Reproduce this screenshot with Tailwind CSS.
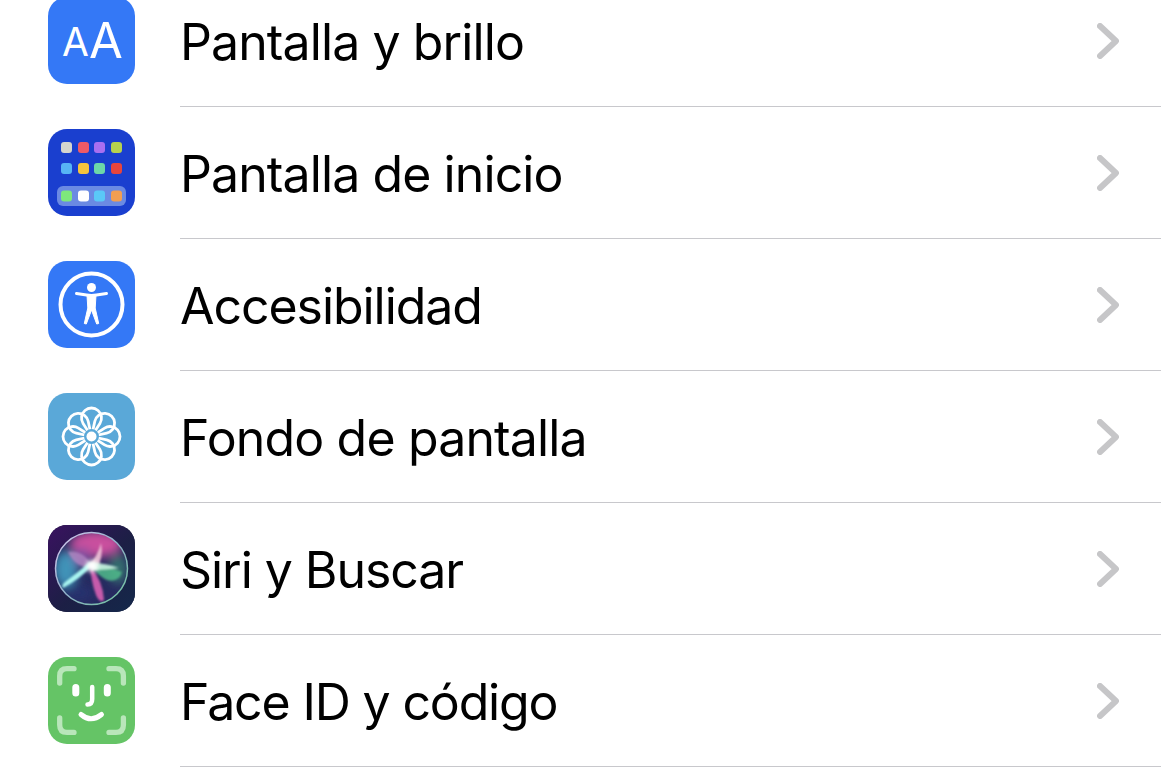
<!DOCTYPE html>
<html>
<head>
<meta charset="utf-8">
<script src="https://cdn.jsdelivr.net/npm/@tailwindcss/browser@4"></script>
</head>
<body class="bg-white">
<div class="h-[780px] w-[1161px] overflow-hidden font-['Inter',sans-serif] text-[50px] tracking-[-0.9px] text-black">
<div class="-mt-[25px] flex flex-col">

<div class="flex h-[132px] items-center pl-[48px]">
<div class="relative mb-[1px] h-[87px] w-[87px] shrink-0 rounded-[19px] bg-[#3478f6] font-normal tracking-normal text-white">
<span class="absolute left-[14px] top-[25px] text-[39px] leading-[40px]">A</span>
<span class="absolute left-[41px] top-[19px] text-[49px] leading-[50px]">A</span>
</div>
<div class="ml-[45px] flex h-full flex-1 items-center justify-between border-b border-[#c8c8cc] pr-[42px]">
<span class="pt-[4px]">Pantalla y brillo</span>
<svg class="h-[36px] w-[22px]" viewBox="0 0 22 36"><path d="M3 3L19 18L3 33" fill="none" stroke="#c6c6c8" stroke-width="6" stroke-linecap="round" stroke-linejoin="round"/></svg>
</div>
</div>

<div class="flex h-[132px] items-center pl-[48px]">
<div class="mb-[1px] h-[87px] w-[87px] shrink-0 rounded-[19px] bg-[#1a3fcf]">
<svg class="h-[87px] w-[87px]" viewBox="0 0 87 87">
<rect x="13" y="13" width="11" height="11" rx="3" fill="#d5d5ce"/><rect x="30" y="13" width="11" height="11" rx="3" fill="#ee5a66"/><rect x="46" y="13" width="11" height="11" rx="3" fill="#a96ff0"/><rect x="63" y="13" width="11" height="11" rx="3" fill="#b6d24e"/>
<rect x="13" y="34" width="11" height="11" rx="3" fill="#57b5f5"/><rect x="30" y="34" width="11" height="11" rx="3" fill="#f7c43c"/><rect x="46" y="34" width="11" height="11" rx="3" fill="#6dd7a8"/><rect x="63" y="34" width="11" height="11" rx="3" fill="#e8453c"/>
<rect x="9" y="57" width="69" height="20" rx="6" fill="#6b8ae3"/>
<rect x="13" y="61.500" width="11" height="11" rx="3" fill="#7ee87c"/><rect x="30" y="61.500" width="11" height="11" rx="3" fill="#fff"/><rect x="46" y="61.500" width="11" height="11" rx="3" fill="#5ac8f7"/><rect x="63" y="61.500" width="11" height="11" rx="3" fill="#f29e52"/>
</svg>
</div>
<div class="ml-[45px] flex h-full flex-1 items-center justify-between border-b border-[#c8c8cc] pr-[42px]">
<span class="pt-[4px]">Pantalla de inicio</span>
<svg class="h-[36px] w-[22px]" viewBox="0 0 22 36"><path d="M3 3L19 18L3 33" fill="none" stroke="#c6c6c8" stroke-width="6" stroke-linecap="round" stroke-linejoin="round"/></svg>
</div>
</div>

<div class="flex h-[132px] items-center pl-[48px]">
<div class="mb-[1px] h-[87px] w-[87px] shrink-0 rounded-[19px] bg-[#3478f6]">
<svg class="h-[87px] w-[87px]" viewBox="0 0 87 87">
<circle cx="43.500" cy="43.500" r="31" fill="none" stroke="#fff" stroke-width="4"/>
<circle cx="43.500" cy="26.500" r="4.500" fill="#fff"/>
<path d="M28.500 32.500L38.500 34Q43.500 34.800 48.500 34L58.500 32.500" fill="none" stroke="#fff" stroke-width="3" stroke-linecap="round"/>
<path d="M39 34L39.800 47L36.300 62.500L38.300 63L43.500 49L48.700 63L50.700 62.500L47.200 47L48 34Z" fill="#fff" stroke="#fff" stroke-width="1" stroke-linejoin="round"/>
</svg>
</div>
<div class="ml-[45px] flex h-full flex-1 items-center justify-between border-b border-[#c8c8cc] pr-[42px]">
<span class="pt-[4px] tracking-[-1.05px]">Accesibilidad</span>
<svg class="h-[36px] w-[22px]" viewBox="0 0 22 36"><path d="M3 3L19 18L3 33" fill="none" stroke="#c6c6c8" stroke-width="6" stroke-linecap="round" stroke-linejoin="round"/></svg>
</div>
</div>

<div class="flex h-[132px] items-center pl-[48px]">
<div class="mb-[1px] h-[87px] w-[87px] shrink-0 rounded-[19px] bg-[#5aa8d8]">
<svg class="h-[87px] w-[87px]" viewBox="0 0 87 87">
<g fill="none" stroke="#fff" stroke-width="2.800" stroke-linejoin="round">
<path d="M43.500 43.500L35.090 30.400A10 10 0 1 1 51.910 30.400Z"/>
<path transform="rotate(45 43.500 43.500)" d="M43.500 43.500L35.090 30.400A10 10 0 1 1 51.910 30.400Z"/>
<path transform="rotate(90 43.500 43.500)" d="M43.500 43.500L35.090 30.400A10 10 0 1 1 51.910 30.400Z"/>
<path transform="rotate(135 43.500 43.500)" d="M43.500 43.500L35.090 30.400A10 10 0 1 1 51.910 30.400Z"/>
<path transform="rotate(180 43.500 43.500)" d="M43.500 43.500L35.090 30.400A10 10 0 1 1 51.910 30.400Z"/>
<path transform="rotate(225 43.500 43.500)" d="M43.500 43.500L35.090 30.400A10 10 0 1 1 51.910 30.400Z"/>
<path transform="rotate(270 43.500 43.500)" d="M43.500 43.500L35.090 30.400A10 10 0 1 1 51.910 30.400Z"/>
<path transform="rotate(315 43.500 43.500)" d="M43.500 43.500L35.090 30.400A10 10 0 1 1 51.910 30.400Z"/>
</g>
<circle cx="43.500" cy="43.500" r="7.500" fill="#5aa8d8"/>
<circle cx="43.500" cy="43.500" r="5" fill="#fff"/>
</svg>
</div>
<div class="ml-[45px] flex h-full flex-1 items-center justify-between border-b border-[#c8c8cc] pr-[42px]">
<span class="pt-[4px] tracking-[-0.85px]">Fondo de pantalla</span>
<svg class="h-[36px] w-[22px]" viewBox="0 0 22 36"><path d="M3 3L19 18L3 33" fill="none" stroke="#c6c6c8" stroke-width="6" stroke-linecap="round" stroke-linejoin="round"/></svg>
</div>
</div>

<div class="flex h-[132px] items-center pl-[48px]">
<div class="mb-[1px] h-[87px] w-[87px] shrink-0 overflow-hidden rounded-[19px] bg-[#1c1c3c]">
<svg class="h-[87px] w-[87px]" viewBox="0 0 87 87">
<defs>
<linearGradient id="sb" x1="0" y1="0" x2="1" y2="1"><stop offset="0" stop-color="#3a1260"/><stop offset="0.550" stop-color="#1c1f45"/><stop offset="1" stop-color="#14284a"/></linearGradient>
<linearGradient id="sr" x1="0" y1="0" x2="1" y2="1"><stop offset="0" stop-color="#d8c8f0"/><stop offset="0.500" stop-color="#8fb0c8"/><stop offset="1" stop-color="#6fc59a"/></linearGradient>
<filter id="sf" x="-40%" y="-40%" width="180%" height="180%"><feGaussianBlur stdDeviation="5"/></filter>
<filter id="sg" x="-40%" y="-40%" width="180%" height="180%"><feGaussianBlur stdDeviation="1.100"/></filter>
<filter id="sh" x="-100%" y="-100%" width="300%" height="300%"><feGaussianBlur stdDeviation="2.500"/></filter>
<clipPath id="sp"><circle cx="43.500" cy="43.500" r="36"/></clipPath>
</defs>
<rect width="87" height="87" fill="url(#sb)"/>
<circle cx="43.500" cy="43.500" r="36" fill="#262a60"/>
<g clip-path="url(#sp)">
<g filter="url(#sf)">
<ellipse cx="48" cy="19" rx="26" ry="13" fill="#c94f9e"/>
<ellipse cx="18" cy="44" rx="12" ry="18" fill="#3f93b8"/>
<ellipse cx="70" cy="44" rx="9" ry="15" fill="#356f6e"/>
<ellipse cx="30" cy="68" rx="16" ry="8" fill="#26306e"/>
<ellipse cx="34" cy="32" rx="9" ry="9" fill="#7a4fa0"/>
</g>
<g filter="url(#sg)">
<path d="M20 27Q37 25 44 42Q28 44 20 27Z" fill="#b98ac6" opacity="0.700"/>
<path d="M44 41Q62 41 74 47Q71 58 59 55Q50 51 44 41Z" fill="#4fb88a" opacity="0.850"/>
<path d="M42 41Q55 56 56 75Q52 79 48 70Q43 56 42 41Z" fill="#d85fb4" opacity="0.900"/>
<path d="M46 39Q32 54 15 63Q13 60 17 57Q30 47 42 37Z" fill="#a8f4f0"/>
<path d="M41 40Q50 30 53 18Q56 32 48 45Z" fill="#f0c4d8" opacity="0.900"/>
<path d="M44 38Q58 38 71 43Q58 45 44 45Z" fill="#c8f4e0" opacity="0.900"/>
</g>
</g>
<circle cx="43.500" cy="43.500" r="36" fill="none" stroke="url(#sr)" stroke-width="1.500"/>
<circle cx="44" cy="41" r="6" fill="#fff" filter="url(#sh)"/>
</svg>
</div>
<div class="ml-[45px] flex h-full flex-1 items-center justify-between border-b border-[#c8c8cc] pr-[42px]">
<span class="pt-[4px] tracking-[-1.05px]">Siri y Buscar</span>
<svg class="h-[36px] w-[22px]" viewBox="0 0 22 36"><path d="M3 3L19 18L3 33" fill="none" stroke="#c6c6c8" stroke-width="6" stroke-linecap="round" stroke-linejoin="round"/></svg>
</div>
</div>

<div class="flex h-[132px] items-center pl-[48px]">
<div class="mb-[1px] h-[87px] w-[87px] shrink-0 rounded-[19px] bg-[#65c466]">
<svg class="h-[87px] w-[87px]" viewBox="0 0 87 87">
<g fill="none" stroke="#b9e6ba" stroke-width="5.300" stroke-linecap="round">
<path d="M11.700 26V19Q11.700 11.700 19 11.700H26"/><path d="M61 11.700H68Q75.400 11.700 75.400 19V26"/><path d="M11.700 61V68Q11.700 75.400 19 75.400H26"/><path d="M61 75.400H68Q75.400 75.400 75.400 68V61"/>
</g>
<g fill="none" stroke="#fff" stroke-linecap="round">
<path d="M27.800 30.500V36M59.300 30.500V36" stroke-width="7"/>
<path d="M44.200 30V42Q44.200 47.500 39.500 47.500" stroke-width="4.500"/>
<path d="M33 57.500Q43 66 53.500 57.500" stroke-width="5"/>
</g>
</svg>
</div>
<div class="ml-[45px] flex h-full flex-1 items-center justify-between border-b border-[#c8c8cc] pr-[42px]">
<span class="pt-[4px] tracking-[-1.15px]">Face ID y código</span>
<svg class="h-[36px] w-[22px]" viewBox="0 0 22 36"><path d="M3 3L19 18L3 33" fill="none" stroke="#c6c6c8" stroke-width="6" stroke-linecap="round" stroke-linejoin="round"/></svg>
</div>
</div>

</div>
</div>
</body>
</html>
